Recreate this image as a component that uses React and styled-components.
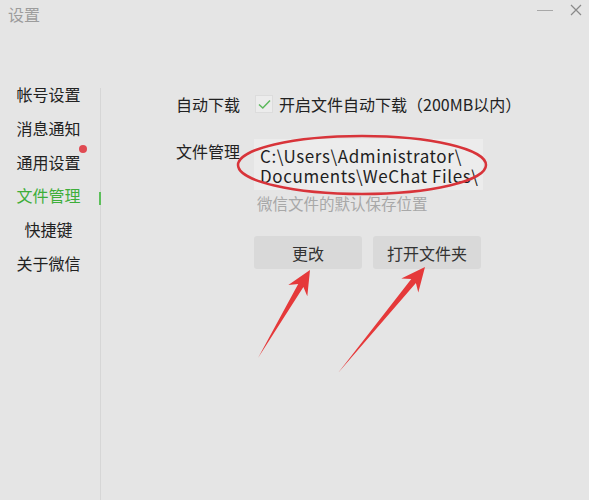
import React from "react";
import styled, { createGlobalStyle } from "styled-components";

const GlobalStyle = createGlobalStyle`
  html, body {
    margin: 0;
    padding: 0;
    background: #e5e5e5;
  }
  body {
    font-family: "Noto Sans CJK SC", "Noto Sans", sans-serif;
  }
`;

const navItems = ["帐号设置", "消息通知", "通用设置", "文件管理", "快捷键", "关于微信"];

const App = () => {
  return (
    <Window>
      <GlobalStyle />
      <TitleBar>
        <Title>设置</Title>
        <Controls>
          <MinButton />
          <CloseButton>
            <svg width="12" height="12" viewBox="0 0 12 12">
              <path d="M1 1 L11 11 M11 1 L1 11" stroke="#8a8a8a" strokeWidth="1.2" />
            </svg>
          </CloseButton>
        </Controls>
      </TitleBar>

      <Body>
        <Sidebar>
          {navItems.map((item) => (
            <NavItem key={item} $active={item === "文件管理"}>
              <NavText>
                {item}
                {item === "通用设置" && <Dot />}
              </NavText>
            </NavItem>
          ))}
        </Sidebar>
        <Divider>
          <Indicator />
        </Divider>

        <Content>
          <Row>
            <Label>自动下载</Label>
            <CheckRow>
              <CheckBox>
                <svg width="13" height="11" viewBox="0 0 13 11">
                  <path d="M1 5.5 L4.8 9 L12 1.5" fill="none" stroke="#5cb85c" strokeWidth="1.5" />
                </svg>
              </CheckBox>
              <span>开启文件自动下载（200MB以内）</span>
            </CheckRow>
          </Row>

          <Row $gap="23px">
            <Label>文件管理</Label>
            <div>
              <PathBox>
                <PathLine>C:\Users\Administrator\</PathLine>
                <PathLine>Documents\WeChat Files\</PathLine>
              </PathBox>
              <Hint>微信文件的默认保存位置</Hint>
              <Buttons>
                <Button>更改</Button>
                <Button>打开文件夹</Button>
              </Buttons>
            </div>
          </Row>
        </Content>
      </Body>

      <Annotations width="589" height="500" viewBox="0 0 589 500">
        <ellipse cx="362" cy="165" rx="124" ry="29" fill="none" stroke="#d8343a" strokeWidth="2.5" />
        <polygon
          points="258,358 298.2,284.0 288.3,285.1 310,270 307.3,296.3 303.4,287.0"
          fill="#e5393a"
        />
        <polygon
          points="338,373 411.3,279.1 401.3,278.6 425,267 418.3,292.6 415.9,282.9"
          fill="#e5393a"
        />
      </Annotations>
    </Window>
  );
};

const Window = styled.div`
  position: relative;
  width: 589px;
  height: 500px;
  display: flex;
  flex-direction: column;
  background: #e5e5e5;
  overflow: hidden;
`;

const TitleBar = styled.div`
  height: 30px;
  display: flex;
  align-items: center;
  justify-content: space-between;
  padding: 0 7px 0 8px;
  margin-bottom: 49px;
`;

const Title = styled.div`
  font-size: 16px;
  color: #9c9c9c;
  margin-top: -2px;
`;

const Controls = styled.div`
  display: flex;
  align-items: center;
  gap: 17px;
  margin-top: -10px;
`;

const MinButton = styled.div`
  width: 16px;
  height: 1px;
  background: #a8a8a8;
`;

const CloseButton = styled.div`
  display: flex;
  width: 12px;
  height: 12px;
`;

const Body = styled.div`
  flex: 1;
  display: flex;
`;

const Sidebar = styled.div`
  width: 97px;
  padding-right: 3px;
  margin-top: -1px;
  display: flex;
  flex-direction: column;
`;

const NavItem = styled.div`
  height: 33.8px;
  line-height: 33.8px;
  text-align: center;
  font-size: 16px;
  color: ${(p) => (p.$active ? "#3dae3a" : "#222")};
`;

const NavText = styled.span`
  position: relative;
`;

const Dot = styled.span`
  position: absolute;
  right: -6px;
  top: -5px;
  width: 8px;
  height: 8px;
  border-radius: 50%;
  background: #e04a52;
`;

const Divider = styled.div`
  position: relative;
  width: 1px;
  margin-top: 9px;
  background: #d6d6d6;
`;

const Indicator = styled.div`
  position: absolute;
  left: -1px;
  top: 104px;
  width: 2px;
  height: 13px;
  background: #5cbf5a;
`;

const Content = styled.div`
  flex: 1;
  padding: 13px 0 0 75px;
  display: flex;
  flex-direction: column;
`;

const Row = styled.div`
  display: flex;
  margin-top: ${(p) => p.$gap || "0"};
`;

const Label = styled.div`
  width: 78px;
  flex-shrink: 0;
  font-size: 16px;
  line-height: 24px;
  color: #222;
`;

const CheckRow = styled.div`
  display: flex;
  align-items: center;
  gap: 6px;
  font-size: 16px;
  line-height: 24px;
  color: #222;
`;

const CheckBox = styled.div`
  width: 16px;
  height: 16px;
  margin-left: 1px;
  display: flex;
  align-items: center;
  justify-content: center;
  background: #ececec;
  border: 1px solid #dcdcdc;
`;

const PathBox = styled.div`
  width: 223px;
  padding: 7px 0 5px 6px;
  background: #ececec;
  display: flex;
  flex-direction: column;
`;

const PathLine = styled.div`
  height: 19.5px;
  font-size: 17px;
  line-height: 19.5px;
  letter-spacing: 0.6px;
  color: #1e1e1e;
  white-space: nowrap;
`;

const Hint = styled.div`
  margin-top: 3px;
  padding-left: 3px;
  font-size: 15.5px;
  line-height: 20px;
  color: #a8a8a8;
`;

const Buttons = styled.div`
  display: flex;
  gap: 11px;
  margin-top: 23px;
`;

const Button = styled.div`
  width: 108px;
  height: 33px;
  display: flex;
  align-items: center;
  justify-content: center;
  border-radius: 3px;
  background: #d9d9d9;
  font-size: 16px;
  color: #333;
`;

const Annotations = styled.svg`
  position: absolute;
  left: 0;
  top: 0;
  pointer-events: none;
`;

export default App;
